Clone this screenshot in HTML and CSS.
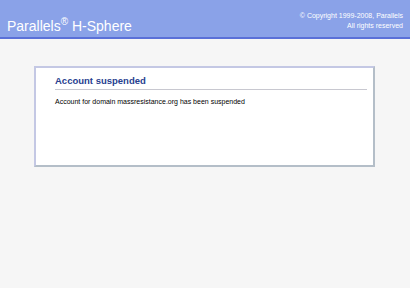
FILE: index.html
```html
<!DOCTYPE html>
<html lang="en">
<head>
    <meta charset="UTF-8">
    <title>Account suspended</title>
    <link rel="stylesheet" href="styles.css">
</head>
<body>
    <div class="header">
        <div class="logo">Parallels<sup>&reg;</sup> H-Sphere</div>
        <div class="copyright">&copy; Copyright 1999-2008, Parallels<br>All rights reserved</div>
    </div>

    <div class="panel">
        <h2>Account suspended</h2>
        <p>Account for domain massresistance.org has been suspended</p>
    </div>
</body>
</html>
```

FILE: styles.css
```css
body {
    margin: 0;
    background-color: #f6f6f6;
    font-family: Tahoma, "Liberation Sans", Arial, sans-serif;
}
.header {
    display: flex;
    justify-content: space-between;
    align-items: flex-start;
    height: 37px;
    background-color: #8aa2e8;
    border-bottom: 2px solid #5a70d8;
    color: #ffffff;
}
.logo {
    font-size: 14px;
    padding: 16px 0 0 7px;
}
.logo sup {
    font-size: 10px;
}
.copyright {
    font-size: 7px;
    text-align: right;
    line-height: 10px;
    padding: 11px 7px 0 0;
}
.panel {
    margin: 27px 35px 0 34px;
    height: 90px;
    padding: 7px 6px 0 19px;
    background-color: #ffffff;
    border: 2px solid #c4c8e4;
    border-bottom-color: #b4bec8;
    border-right-color: #b4bec8;
}
h2 {
    margin: 0;
    font-size: 9.5px;
    font-weight: bold;
    color: #27408f;
    padding-bottom: 3px;
    border-bottom: 1px solid #c8c8d0;
}
p {
    margin: 8px 0 0 0;
    font-size: 7px;
    color: #000000;
}
```
